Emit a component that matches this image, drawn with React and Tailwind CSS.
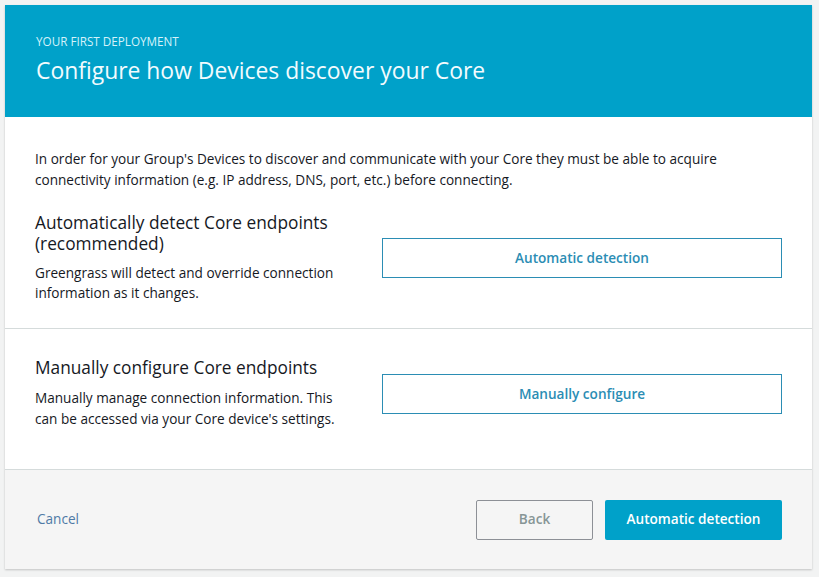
export default function App() {
  return (
    <div className="min-h-[577px] bg-[#f2f3f3] p-[5px] pr-[7px] font-['Open_Sans',sans-serif]">
      <div className="bg-white shadow-[0_1px_2px_rgba(0,0,0,0.2)]">
        {/* Header */}
        <div className="h-[112px] bg-[#00a1c9] px-[31px] pt-[29px]">
          <p className="text-[11.7px] leading-[14px] text-[#d6f2fa]">
            YOUR FIRST DEPLOYMENT
          </p>
          <h1 className="mt-[9px] text-[22.9px] leading-[28px] text-[#f2fbfe]">
            Configure how Devices discover your Core
          </h1>
        </div>

        {/* Intro + auto */}
        <div className="px-[30px] pt-[31px] pb-[25px] border-b border-[#d5dbdb]">
          <p className="text-[13.6px] leading-[21px] text-[#16191f]">
            In order for your Group's Devices to discover and communicate with your Core they must be able to acquire
            connectivity information (e.g. IP address, DNS, port, etc.) before connecting.
          </p>
          <div className="mt-[22px] flex items-start">
            <div className="w-[316px]">
              <h2 className="text-[17.3px] leading-[21px] text-[#16191f]">
                Automatically detect Core endpoints (recommended)
              </h2>
              <p className="mt-[9px] text-[13.6px] leading-[20px] text-[#16191f]">
                Greengrass will detect and override connection information as it changes.
              </p>
            </div>
            <button className="ml-auto mt-[26px] h-[40px] w-[400px] border border-[#2b8db4] text-[13.6px] font-semibold text-[#2b8db4]">
              Automatic detection
            </button>
          </div>
        </div>

        {/* Manual */}
        <div className="px-[30px] pt-[28px] pb-[40px] flex items-start">
          <div className="w-[316px]">
            <h2 className="text-[17.3px] leading-[21px] text-[#16191f]">
              Manually configure Core endpoints
            </h2>
            <p className="mt-[9px] text-[13.6px] leading-[21px] text-[#16191f]">
              Manually manage connection information. This can be accessed via your Core device's settings.
            </p>
          </div>
          <button className="ml-auto mt-[17px] h-[40px] w-[400px] border border-[#2b8db4] text-[13.6px] font-semibold text-[#2b8db4]">
            Manually configure
          </button>
        </div>

        {/* Footer */}
        <div className="h-[100px] bg-[#f5f5f5] border-t border-[#d5dbdb] px-[30px] flex items-center">
          <span className="ml-[2px] text-[13.6px] text-[#4f7aa6]">Cancel</span>
          <button className="ml-auto h-[40px] w-[117px] rounded-[2px] border border-[#8d9096] bg-[#f5f5f5] text-[13.6px] font-semibold text-[#879596]">
            Back
          </button>
          <button className="ml-[12px] h-[40px] w-[177px] rounded-[2px] bg-[#00a1c9] text-[13.6px] font-semibold text-white">
            Automatic detection
          </button>
        </div>
      </div>
    </div>
  );
}
